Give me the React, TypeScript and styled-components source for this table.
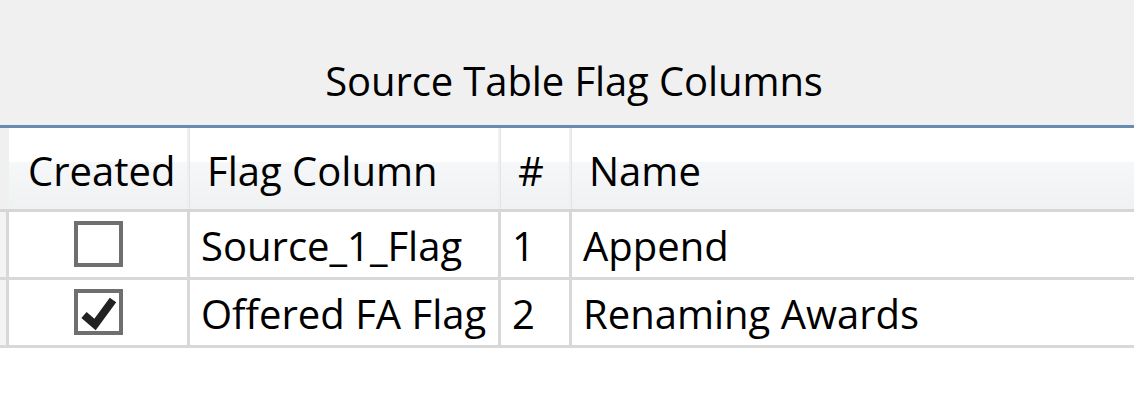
import React from "react";
import styled, { createGlobalStyle } from "styled-components";

const Global = createGlobalStyle`
  html, body { margin: 0; padding: 0; background: #ffffff; }
  body { font-family: "Open Sans", "Noto Sans", sans-serif; color: #000; }
`;

const Window = styled.div`
  width: 1134px;
  height: 396px;
  background: #ffffff;
  overflow: hidden;
`;

const TitleBar = styled.div`
  height: 125px;
  background: #f0f0f0;
  border-bottom: 3px solid #6a8bb0;
  display: flex;
  align-items: center;
  justify-content: center;
  font-size: 40px;
  letter-spacing: -0.1px;
`;

const Title = styled.span`
  margin-top: 36px;
  margin-left: 14px;
`;

const Grid = styled.div`
  display: grid;
  grid-template-columns: 9px 181px 311px 71px 1fr;
  grid-auto-rows: 68px;
  grid-template-rows: 84px;
`;

const Corner = styled.div`
  background: #f0f0f0;
  border-right: 3px solid #e2e3e5;
  border-bottom: 3px solid #d6d6d6;
  box-sizing: border-box;
  width: 12px;
`;

const HeaderCell = styled.div<{ $last?: boolean; $first?: boolean }>`
  box-sizing: border-box;
  display: flex;
  align-items: center;
  padding-left: ${(p) => (p.$first ? 19 : 17)}px;
  padding-top: 3px;
  font-size: 40px;
  background: linear-gradient(
    to bottom,
    #ffffff 0,
    #ffffff 34px,
    #f6f7f8 34px,
    #f0f1f3 100%
  );
  border-bottom: 3px solid #d6d6d6;
  box-shadow: ${(p) =>
    p.$last ? "none" : "inset -2px 0 0 #f3f3f4, inset -4px 0 0 #e3e4e6, inset -6px 0 0 #eeeff0"};
  margin-right: ${(p) => (p.$last ? 0 : -3)}px;
  position: relative;
  z-index: 0;
`;

const RowHeader = styled.div`
  background: #f3f4f6;
  border-right: 3px solid #d8d8d8;
  border-bottom: 3px solid #d8d8d8;
  box-sizing: border-box;
`;

const Cell = styled.div<{ $center?: boolean; $last?: boolean }>`
  box-sizing: border-box;
  display: flex;
  align-items: center;
  justify-content: ${(p) => (p.$center ? "center" : "flex-start")};
  padding-left: ${(p) => (p.$center ? 0 : 11)}px;
  padding-top: 1px;
  font-size: 40px;
  background: #ffffff;
  border-right: ${(p) => (p.$last ? "none" : "3px solid #d8d8d8")};
  border-bottom: 3px solid #d8d8d8;
`;

const Box = styled.div`
  width: 49px;
  height: 46px;
  box-sizing: border-box;
  border: 4px solid #6f6f6f;
  background: #ffffff;
  display: flex;
  align-items: center;
  justify-content: center;
  margin-left: 1px;
  margin-top: -2px;
`;

const Check = () => (
  <svg width="41" height="38" viewBox="0 0 41 38">
    <path
      d="M6 22 L17 31.5 L35 7"
      fill="none"
      stroke="#222222"
      strokeWidth="8"
      strokeLinejoin="miter"
    />
  </svg>
);

const rows = [
  { created: false, flag: "Source_1_Flag", n: "1", name: "Append" },
  { created: true, flag: "Offered FA Flag", n: "2", name: "Renaming Awards" },
];

export default function App() {
  return (
    <Window>
      <Global />
      <TitleBar>
        <Title>Source Table Flag Columns</Title>
      </TitleBar>
      <Grid>
        <Corner />
        <HeaderCell $first>Created</HeaderCell>
        <HeaderCell>Flag Column</HeaderCell>
        <HeaderCell>#</HeaderCell>
        <HeaderCell $last>Name</HeaderCell>
        {rows.map((r) => (
          <React.Fragment key={r.n}>
            <RowHeader />
            <Cell $center>
              <Box>{r.created ? <Check /> : null}</Box>
            </Cell>
            <Cell>{r.flag}</Cell>
            <Cell>{r.n}</Cell>
            <Cell $last>{r.name}</Cell>
          </React.Fragment>
        ))}
      </Grid>
    </Window>
  );
}
